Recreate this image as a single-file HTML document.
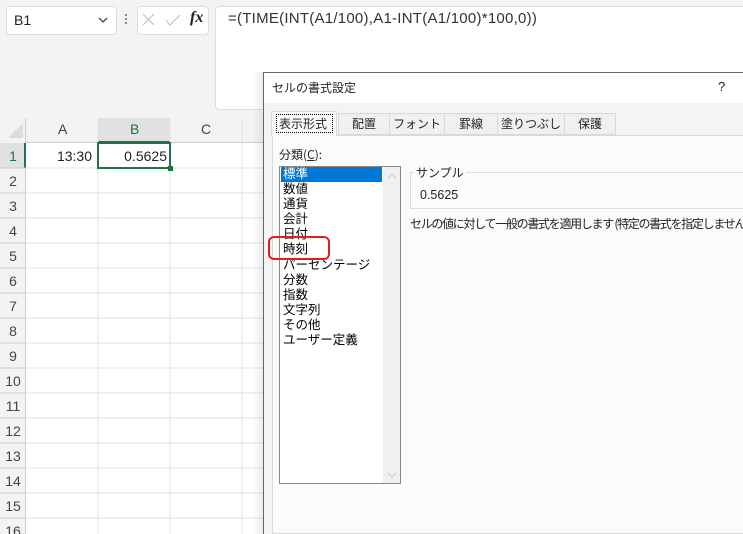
<!DOCTYPE html><html><head><meta charset="utf-8"><style>
*{margin:0;padding:0;box-sizing:border-box}
html,body{width:743px;height:534px;overflow:hidden}
body{background:#f3f3f3;font-family:"Liberation Sans","Noto Sans CJK JP",sans-serif;position:relative;font-size:13px;color:#222}
.a{position:absolute}
.jp{font-family:"Noto Sans CJK JP","Liberation Sans",sans-serif}
</style></head><body>
<div class="a" style="left:6px;top:6px;width:111px;height:29px;background:#fff;border:1px solid #ddd;border-radius:4px"></div>
<div class="a" style="left:14px;top:12px;font-size:14px">B1</div>
<svg class="a" style="left:98px;top:17px" width="10" height="7"><path d="M1 1L5 5L9 1" stroke="#444" fill="none" stroke-width="1.3"/></svg>
<div class="a" style="left:125px;top:14px;width:2px;height:2px;background:#888;box-shadow:0 4px #888,0 8px #888"></div>
<div class="a" style="left:137px;top:6px;width:72px;height:29px;background:#fff;border:1px solid #ddd;border-radius:4px"></div>
<svg class="a" style="left:142px;top:13px" width="40" height="14"><path d="M1 1L12 12M12 1L1 12" stroke="#bbb" fill="none"/><path d="M24 7L28 12L38 2" stroke="#bbb" fill="none"/></svg>
<div class="a" style="left:190px;top:9px;font-family:'Liberation Serif',serif;font-style:italic;font-weight:bold;font-size:16px">fx</div>
<div class="a" style="left:215px;top:6px;width:528px;height:104px;background:#fff;border:1px solid #ddd;border-right:none;border-radius:4px 0 0 4px"></div>
<div class="a" style="left:228px;top:10px;font-size:15px;letter-spacing:0.25px;color:#333">=(TIME(INT(A1/100),A1-INT(A1/100)*100,0))</div>
<div class="a" style="left:0;top:118px;width:743px;height:416px;background:#fff"></div>
<div class="a" style="left:0;top:118px;width:743px;height:25px;background:#f3f3f3;border-bottom:1px solid #ccc"></div>
<div class="a" style="left:0;top:118px;width:26px;height:416px;background:#f3f3f3;border-right:1px solid #ccc"></div>
<svg class="a" style="left:6px;top:121px" width="18" height="18"><path d="M17 2L17 17L2 17Z" fill="#ddd"/></svg>
<div class="a" style="left:98px;top:118px;width:72px;height:25px;background:#e1e1e1;border-bottom:2px solid #217346"></div>
<div class="a" style="left:0;top:143px;width:26px;height:25px;background:#e1e1e1;border-right:2px solid #217346"></div>
<div class="a" style="left:58px;top:121px;font-size:14px;color:#444">A</div>
<div class="a" style="left:130px;top:121px;font-size:14px;color:#217346">B</div>
<div class="a" style="left:201px;top:121px;font-size:14px;color:#444">C</div>
<svg class="a" style="left:0;top:118px" width="264" height="416">
<g stroke="#e1e1e1">
<path d="M98 0V416M170 0V416M242 0V416"/>
<path d="M26 50H264M26 75H264M26 100H264M26 125H264M26 150H264M26 175H264M26 200H264M26 225H264M26 250H264M26 275H264M26 300H264M26 325H264M26 350H264M26 375H264M26 400H264"/>
</g>
<g stroke="#ccc"><path d="M0 50H26M0 75H26M0 100H26M0 125H26M0 150H26M0 175H26M0 200H26M0 225H26M0 250H26M0 275H26M0 300H26M0 325H26M0 350H26M0 375H26M0 400H26"/></g>
<g font-family="Liberation Sans" font-size="14" fill="#444" text-anchor="middle">
<text x="13" y="43" fill="#217346">1</text><text x="13" y="68">2</text><text x="13" y="93">3</text><text x="13" y="118">4</text><text x="13" y="143">5</text><text x="13" y="168">6</text><text x="13" y="193">7</text><text x="13" y="218">8</text><text x="13" y="243">9</text><text x="13" y="268">10</text><text x="13" y="293">11</text><text x="13" y="318">12</text><text x="13" y="343">13</text><text x="13" y="368">14</text><text x="13" y="393">15</text><text x="13" y="418">16</text>
</g>
<text x="92" y="43" font-family="Liberation Sans" font-size="14" fill="#222" text-anchor="end">13:30</text>
<text x="167" y="43" font-family="Liberation Sans" font-size="14" fill="#222" text-anchor="end">0.5625</text>
<rect x="98" y="25" width="72" height="25" fill="none" stroke="#217346" stroke-width="2"/>
<rect x="168" y="48" width="5" height="5" fill="#217346"/>
</svg>
<div class="a" style="left:252px;top:72px;width:12px;height:462px;background:linear-gradient(to right,rgba(0,0,0,0),rgba(0,0,0,0.08))"></div>
<div class="a" style="left:263px;top:72px;width:480px;height:462px;background:#f7f7f7;border-left:1px solid #666;border-top:1px solid #666"></div>
<div class="a" style="left:264px;top:73px;width:479px;height:30px;background:#fff"></div>
<div class="a jp" style="left:272px;top:79px;font-size:12px">セルの書式設定</div>
<div class="a" style="left:718px;top:79px;font-size:13px">?</div>
<div class="a" style="left:264px;top:103px;width:479px;height:431px;background:#f4f4f4"></div>
<div class="a" style="left:272px;top:135px;width:471px;height:399px;background:#fbfbfb;border:1px solid #d9d9d9;border-right:none"></div>
<div class="a" style="left:271px;top:111px;width:66px;height:25px;background:#fbfbfb;border:1px solid #d9d9d9;border-bottom:none"></div>
<div class="a jp" style="left:276px;top:114px;width:57px;height:19px;border:1px dotted #000;font-size:12px;padding-left:2px;line-height:17px">表示形式</div>
<div class="a jp" style="left:338px;top:113px;width:52px;height:22px;border:1px solid #d9d9d9;font-size:12px;text-align:center;line-height:20px;background:#f0f0f0">配置</div>
<div class="a jp" style="left:389px;top:113px;width:56px;height:22px;border:1px solid #d9d9d9;font-size:12px;text-align:center;line-height:20px;background:#f0f0f0">フォント</div>
<div class="a jp" style="left:444px;top:113px;width:54px;height:22px;border:1px solid #d9d9d9;font-size:12px;text-align:center;line-height:20px;background:#f0f0f0">罫線</div>
<div class="a jp" style="left:497px;top:113px;width:68px;height:22px;border:1px solid #d9d9d9;font-size:12px;text-align:center;line-height:20px;background:#f0f0f0">塗りつぶし</div>
<div class="a jp" style="left:564px;top:113px;width:52px;height:22px;border:1px solid #d9d9d9;font-size:12px;text-align:center;line-height:20px;background:#f0f0f0">保護</div>
<div class="a jp" style="left:279px;top:146px;font-size:12px">分類(<u>C</u>):</div>
<div class="a" style="left:279px;top:166px;width:122px;height:318px;background:#fff;border:1px solid #888"></div>
<div class="a" style="left:383px;top:167px;width:17px;height:316px;background:#f0f0f0"></div>
<svg class="a" style="left:386px;top:172px" width="12" height="310"><path d="M2 6L6 2L10 6" stroke="#ccc" fill="none"/><path d="M2 301L6 305L10 301" stroke="#ccc" fill="none"/></svg>
<div class="a" style="left:281px;top:167px;width:101px;height:15px;background:#0078d7"></div>
<div class="a jp" style="left:283px;top:165px;font-size:12.5px;line-height:15.1px;color:#000">
<div style="color:#fff">標準</div><div>数値</div><div>通貨</div><div>会計</div><div>日付</div><div>時刻</div><div>パーセンテージ</div><div>分数</div><div>指数</div><div>文字列</div><div>その他</div><div>ユーザー定義</div></div>
<div class="a" style="left:268px;top:236px;width:62px;height:24px;border:2px solid #e02020;border-radius:6px"></div>
<div class="a" style="left:410px;top:172px;width:333px;height:37px;border:1px solid #ddd;border-right:none"></div>
<div class="a jp" style="left:414px;top:164px;font-size:12px;background:#fbfbfb;padding:0 2px">サンプル</div>
<div class="a" style="left:420px;top:188px;font-size:12.5px">0.5625</div>
<div class="a jp" style="left:410px;top:215px;width:333px;overflow:hidden;font-size:12px;letter-spacing:-1.3px;white-space:nowrap">セルの値に対して一般の書式を適用します (特定の書式を指定しません</div>
</body></html>
